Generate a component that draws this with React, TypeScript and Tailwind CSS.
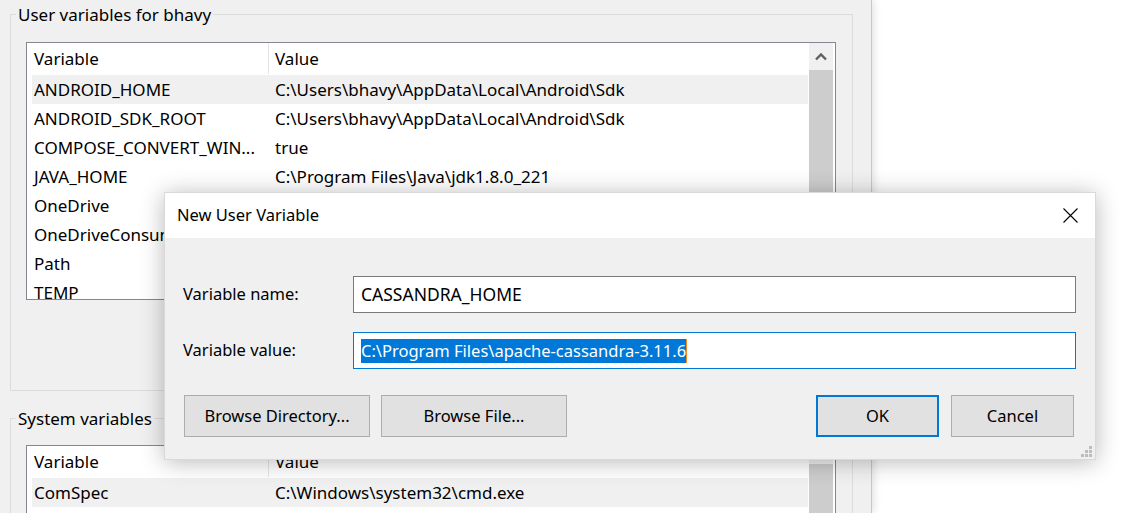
import React from "react";

type Row = { name: string; value: string };

const USER_ROWS: Row[] = [
  { name: "ANDROID_HOME", value: "C:\\Users\\bhavy\\AppData\\Local\\Android\\Sdk" },
  { name: "ANDROID_SDK_ROOT", value: "C:\\Users\\bhavy\\AppData\\Local\\Android\\Sdk" },
  { name: "COMPOSE_CONVERT_WIN...", value: "true" },
  { name: "JAVA_HOME", value: "C:\\Program Files\\Java\\jdk1.8.0_221" },
  { name: "OneDrive", value: "C:\\Users\\bhavy\\OneDrive" },
  { name: "OneDriveConsumer", value: "C:\\Users\\bhavy\\OneDrive" },
  { name: "Path", value: "C:\\Users\\bhavy\\AppData\\Local\\Microsoft\\WindowsApps;" },
  { name: "TEMP", value: "C:\\Users\\bhavy\\AppData\\Local\\Temp" },
];

const SYSTEM_ROWS: Row[] = [
  { name: "ComSpec", value: "C:\\Windows\\system32\\cmd.exe" },
  { name: "DriverData", value: "C:\\Windows\\System32\\Drivers\\DriverData" },
];

function ScrollUp() {
  return (
    <svg width="12" height="9" viewBox="0 0 12 9" className="block">
      <path d="M1 7.5 L6 2.5 L11 7.5" fill="none" stroke="#606060" strokeWidth="2.4" />
    </svg>
  );
}

function ListView({ rows, height }: { rows: Row[]; height: number }) {
  return (
    <div
      className="flex border border-[#828790] bg-white w-[810px] overflow-hidden"
      style={{ height }}
    >
      <div className="flex-1 min-w-0">
        {/* Header */}
        <div className="flex h-[32px] leading-[32px]">
          <div className="w-[241px] pl-[7px]">Variable</div>
          <div className="w-px h-[31px] bg-[#e5e5e5]" />
          <div className="pl-[6px]">Value</div>
        </div>
        {/* Rows */}
        <div className="ml-[5px]">
          {rows.map((r, i) => (
            <div
              key={r.name}
              className={`flex h-[29px] leading-[29px] whitespace-nowrap ${i === 0 ? "bg-[#f0f0f0]" : ""}`}
            >
              <div className="w-[236px] pl-[2px] overflow-hidden">{r.name}</div>
              <div className="pl-[7px]">{r.value}</div>
            </div>
          ))}
        </div>
      </div>
      <div className="ml-px mr-[2px] w-[24px] flex flex-col bg-[#f0f0f0]">
        <div className="h-[27px] flex items-center justify-center">
          <ScrollUp />
        </div>
        <div className="h-[200px] bg-[#cdcdcd]" />
      </div>
    </div>
  );
}

function GroupBox({
  label,
  height,
  listTop,
  children,
}: {
  label: string;
  height: number;
  listTop: number;
  children: React.ReactNode;
}) {
  return (
    <div className="relative border border-[#dcdcdc] w-[843px]" style={{ height }}>
      <span className="absolute -top-[12px] left-[5px] px-[2px] bg-[#f0f0f0] leading-[24px]">
        {label}
      </span>
      <div className="ml-[15px]" style={{ marginTop: listTop }}>
        {children}
      </div>
    </div>
  );
}

function WinButton({
  children,
  width,
  primary,
}: {
  children: React.ReactNode;
  width: string;
  primary?: boolean;
}) {
  return (
    <button
      type="button"
      className={`h-[42px] ${width} bg-[#e1e1e1] text-black ${
        primary ? "border-2 border-[#0078d7]" : "border border-[#adadad]"
      }`}
    >
      {children}
    </button>
  );
}

function NewVariableDialog() {
  return (
    <div className="absolute left-[164px] top-[192px] w-[932px] h-[268px] bg-[#f0f0f0] border border-[#d9d9d9] shadow-[0_2px_22px_rgba(0,0,0,0.28)] flex flex-col text-[16.5px]">
      {/* Title bar */}
      <div className="h-[45px] bg-white flex items-center justify-between pl-[12px] pr-[17px] shrink-0">
        <span>New User Variable</span>
        <svg width="15" height="15" viewBox="0 0 15 15">
          <path d="M0.5 0.5 L14.5 14.5 M14.5 0.5 L0.5 14.5" stroke="#000" strokeWidth="1.1" />
        </svg>
      </div>

      {/* Fields */}
      <div className="pt-[38px] pl-[18px] pr-[19px] flex flex-col gap-[19px]">
        <div className="flex items-center">
          <label className="w-[170px]">Variable name:</label>
          <div className="flex-1 h-[37px] bg-white border border-[#7a7a7a] flex items-center pl-[7px] text-[17.5px]">
            CASSANDRA_HOME
          </div>
        </div>
        <div className="flex items-center">
          <label className="w-[170px]">Variable value:</label>
          <div className="flex-1 h-[37px] bg-white border border-[#0078d7] flex items-center pl-[7px]">
            <span className="bg-[#0078d7] text-white leading-[24px]">
              C:\Program Files\apache-cassandra-3.11.6
            </span>
            <span className="w-px h-[24px] bg-[#f08a24]" />
          </div>
        </div>
      </div>

      {/* Buttons */}
      <div className="mt-[26px] pl-[19px] pr-[21px] flex items-center">
        <div className="flex gap-[11px]">
          <WinButton width="w-[186px]">Browse Directory...</WinButton>
          <WinButton width="w-[186px]">Browse File...</WinButton>
        </div>
        <div className="ml-auto flex gap-[12px]">
          <WinButton width="w-[123px]" primary>
            OK
          </WinButton>
          <WinButton width="w-[123px]">Cancel</WinButton>
        </div>
      </div>

      {/* Resize grip */}
      <svg className="absolute right-[2px] bottom-[1px]" width="12" height="12" viewBox="0 0 12 12">
        <g fill="#bdbdbd">
          <rect x="8" y="0" width="3" height="3" />
          <rect x="4" y="4" width="3" height="3" />
          <rect x="8" y="4" width="3" height="3" />
          <rect x="0" y="8" width="3" height="3" />
          <rect x="4" y="8" width="3" height="3" />
          <rect x="8" y="8" width="3" height="3" />
        </g>
      </svg>
    </div>
  );
}

export default function App() {
  return (
    <div className="relative w-[1127px] h-[513px] overflow-hidden bg-white text-black text-[17px] font-['Noto_Sans','Open_Sans',sans-serif]">
      {/* Environment Variables window behind */}
      <div className="w-[872px] h-full bg-[#f0f0f0] border-r border-[#c8c8c8] shadow-[2px_0_8px_rgba(0,0,0,0.12)] pt-[14px] pl-[10px]">
        <GroupBox label="User variables for bhavy" height={377} listTop={27}>
          <ListView rows={USER_ROWS} height={258} />
        </GroupBox>
        <div className="mt-[27px]">
          <GroupBox label="System variables" height={200} listTop={26}>
            <ListView rows={SYSTEM_ROWS} height={150} />
          </GroupBox>
        </div>
      </div>

      <NewVariableDialog />
    </div>
  );
}
